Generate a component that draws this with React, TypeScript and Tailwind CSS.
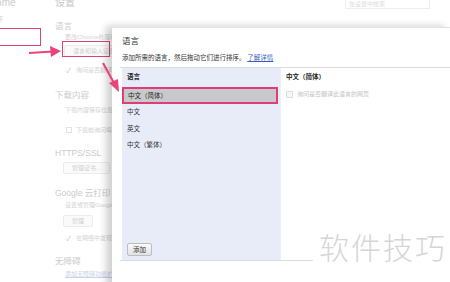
import React from 'react';

const font = { fontFamily: '"Liberation Sans", "Noto Sans CJK SC", sans-serif' };

const Check = ({ checked }: { checked?: boolean }) => (
  <span className="inline-flex w-[7px] h-[7px] items-center justify-center text-[7px] leading-none text-[#c4c4c4]">
    {checked ? '✓' : <span className="w-[6px] h-[6px] border border-[#e2e2e2]" />}
  </span>
);

const GhostButton = ({ children, className = '' }: { children: React.ReactNode; className?: string }) => (
  <div className={`flex w-fit h-[12px] items-center rounded-[2px] border border-[#ececec] bg-[#fafafa] px-[8px] text-[6px] leading-[8px] text-[#d0d0d0] ${className}`}>
    {children}
  </div>
);

const Background = () => (
  <div className="flex h-full text-[#cbcbcb]">
    {/* sidebar */}
    <div className="w-[55px] shrink-0 overflow-hidden">
      <div className="-mt-[3px] -ml-[20px] text-[10px] leading-[12px]">Chrome</div>
      <div className="mt-[6px] -ml-[9px] text-[6px] leading-[8px] text-[#d2d2d2]">程序</div>
    </div>
    {/* main settings column */}
    <div className="flex-1 flex flex-col items-start">
      <div className="-mt-[3px] w-full flex items-start justify-between pr-[20px]">
        <div className="text-[10px] leading-[12px] text-[#c6c6c6]">设置</div>
        <div className="mt-[2px] w-[85px] h-[10px] border border-[#eeeeee] px-[3px] text-[6px] leading-[8px] text-[#dcdcdc]">在设置中搜索</div>
      </div>
      <div className="mt-[12px] text-[8.5px] leading-[10px]">语言</div>
      <div className="ml-[10px] mt-[2px] text-[6px] leading-[8px] text-[#d3d3d3]">更改Chrome处理和显示语言的方式</div>
      <GhostButton className="ml-[9px] mt-[4px]">语言和输入设置...</GhostButton>
      <div className="ml-[10px] mt-[9px] flex items-center gap-[4px] text-[6px] leading-[8px] text-[#d3d3d3]"><Check checked />询问是否翻译非您所用语言的网页</div>

      <div className="mt-[16px] text-[8.5px] leading-[10px]">下载内容</div>
      <div className="ml-[10px] mt-[6px] text-[6px] leading-[8px] text-[#d3d3d3]">下载内容保存位置：</div>
      <div className="ml-[10px] mt-[12px] flex items-center gap-[4px] text-[6px] leading-[8px] text-[#d3d3d3]"><Check />下载前询问每个文件的保存位置</div>

      <div className="mt-[14px] text-[8.5px] leading-[10px]">HTTPS/SSL</div>
      <GhostButton className="ml-[8px] mt-[4px]">管理证书...</GhostButton>

      <div className="mt-[14px] text-[8.5px] leading-[10px]">Google 云打印</div>
      <div className="ml-[10px] mt-[3px] text-[6px] leading-[8px] text-[#d3d3d3]">设置或管理Google云打印中的打印机</div>
      <GhostButton className="ml-[8px] mt-[6px]">管理</GhostButton>
      <div className="ml-[10px] mt-[7px] flex items-center gap-[4px] text-[6px] leading-[8px] text-[#d3d3d3]"><Check checked />在网络中发现新打印机时向我显示通知</div>

      <div className="mt-[14px] text-[8.5px] leading-[10px]">无障碍</div>
      <div className="ml-[10px] mt-[4px] text-[6px] leading-[8px] text-[#c8d2ec] underline">添加无障碍功能扩展程序</div>
    </div>
  </div>
);

const languages = ['中文', '英文', '中文（繁体）'];

const Dialog = () => (
  <div className="absolute left-[112px] top-[27px] right-0 bottom-[-20px] bg-white shadow-[-6px_-1px_7px_rgba(0,0,0,0.18)] border-t border-[#e3e3e3] flex flex-col">
    <div className="px-[10px] pt-[8px] text-[8.5px] leading-[11px] text-[#333]">语言</div>
    <div className="px-[10px] pt-[7px] pb-[5px] text-[6.5px] leading-[8px] text-[#333]">
      添加所需的语言，然后拖动它们进行排序。 <span className="text-[#3a5fc4] underline">了解详情</span>
    </div>
    <div className="ml-[8px] flex h-[194px] border-t border-b border-[#dcdcdc]">
      <div className="w-[158px] ml-[2px] bg-[#e8ecf9] flex flex-col">
        <div className="px-[5px] pt-[5px] pb-[6px] text-[6.5px] leading-[8px] font-bold text-[#222]">语言</div>
        <div className="mr-[2px] h-[17px] flex items-center px-[4px] bg-[#c9c8cc] border-[2px] border-[#dd3f74] text-[6.5px] leading-[8px] text-[#222]">
          中文（简体）
        </div>
        {languages.map((l) => (
          <div key={l} className="h-[16.5px] flex items-center px-[5px] text-[6.5px] leading-[8px] text-[#333]">{l}</div>
        ))}
        <div className="flex-1" />
        <div className="px-[5px] pb-[4px]">
          <div className="flex w-fit h-[13px] items-center rounded-[2px] border border-[#bdbdbd] bg-gradient-to-b from-[#fafafa] to-[#e2e2e2] px-[5px] text-[6.5px] leading-[8px] text-[#333]">添加</div>
        </div>
      </div>
      <div className="flex-1 pl-[5px] pt-[5px] border-l border-[#f0f0f0]">
        <div className="text-[6.5px] leading-[8px] font-bold text-[#222]">中文（简体）</div>
        <div className="mt-[9px] flex items-center gap-[4px] text-[6px] leading-[8px] text-[#c4c4c4]">
          <span className="w-[7px] h-[7px] border border-[#dedede] bg-[#f6f6f6]" />
          询问是否翻译此语言的网页
        </div>
      </div>
    </div>
  </div>
);

const Arrows = () => (
  <svg className="absolute inset-0 pointer-events-none" width="450" height="282" viewBox="0 0 450 282">
    <g fill="#e8457c" stroke="#e8457c">
      <line x1="29" y1="53" x2="53" y2="51.5" strokeWidth="2" />
      <polygon points="61,51 50,46 51,57" stroke="none" />
      <line x1="103" y1="63" x2="114" y2="83" strokeWidth="2.2" />
      <polygon points="119,92 109,83 118,79" stroke="none" />
    </g>
  </svg>
);

export default function App() {
  return (
    <div className="relative w-[450px] h-[282px] overflow-hidden bg-white" style={font}>
      <Background />
      {/* annotation boxes */}
      <div className="absolute left-[-2px] top-[28px] w-[43px] h-[18px] border-[1.5px] border-[#de4275]" />
      <div className="absolute left-[62px] top-[41px] w-[48px] h-[16px] border-[1.5px] border-[#de4275]" />
      <Dialog />
      <Arrows />
      <div className="absolute left-[313px] top-[228px] whitespace-nowrap px-[6px] bg-white text-[30px] leading-[36px] tracking-[2px] text-[#d6d6d6]" style={{ fontFamily: '"Noto Sans CJK SC", sans-serif', fontWeight: 300 }}>
        软件技巧
      </div>
    </div>
  );
}
